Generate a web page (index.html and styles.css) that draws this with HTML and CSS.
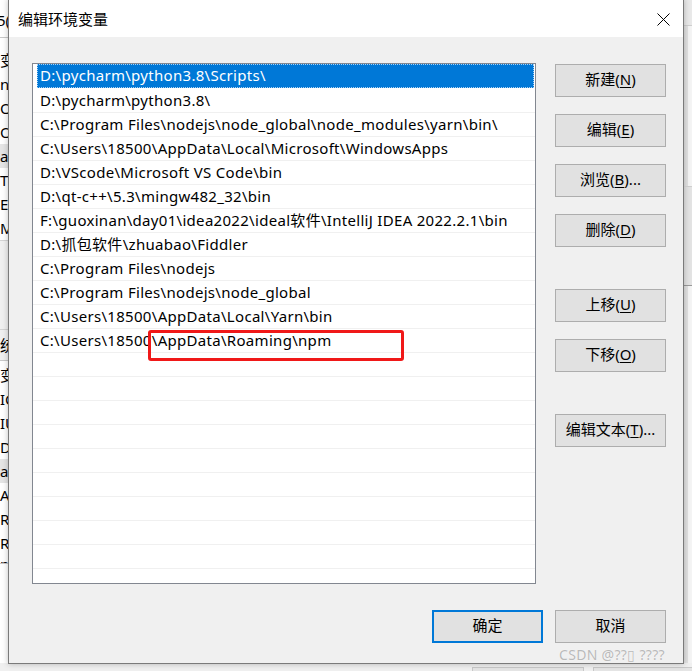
FILE: index.html
```html
<!DOCTYPE html>
<html>
<head>
<meta charset="utf-8">
<link rel="stylesheet" href="styles.css">
</head>
<body>
<div class="desktop">
  <div class="bg-left">
    <div class="bl-row bl-top">5(</div>
    <div class="bl-row">变</div>
    <div class="bl-row">nt</div>
    <div class="bl-row">Or</div>
    <div class="bl-row">Or</div>
    <div class="bl-row bl-sel">a</div>
    <div class="bl-row">T</div>
    <div class="bl-row">E</div>
    <div class="bl-row">M</div>
    <div class="bl-gap"></div>
    <div class="bl-row bl-head">统</div>
    <div class="bl-row bl-first">变</div>
    <div class="bl-row">IC</div>
    <div class="bl-row">IU</div>
    <div class="bl-row">DS</div>
    <div class="bl-row bl-sel">a</div>
    <div class="bl-row">A</div>
    <div class="bl-row">R</div>
    <div class="bl-row">R</div>
    <div class="bl-row bl-cut">n</div>
  </div>
  <div class="bg-right">
    <div class="br-a"></div>
    <div class="br-b"></div>
    <div class="br-c"></div>
    <div class="br-d"></div>
  </div>
  <div class="bg-bottom">
    <div class="bb-btn bb-1"></div>
    <div class="bb-btn bb-2"></div>
  </div>
</div>

<div class="dialog">
  <div class="titlebar">
    <span class="title">编辑环境变量</span>
    <svg class="close" width="13" height="13" viewBox="0 0 13 13"><path d="M0.5 0.5L12.5 12.5M12.5 0.5L0.5 12.5" stroke="#000" stroke-width="1" fill="none"/></svg>
  </div>
  <div class="body">
    <div class="main">
      <div class="list">
        <div class="row sel"><span class="cell">D:\pycharm\python3.8\Scripts\</span></div>
        <div class="row"><span class="cell">D:\pycharm\python3.8\</span></div>
        <div class="row"><span class="cell">C:\Program Files\nodejs\node_global\node_modules\yarn\bin\</span></div>
        <div class="row"><span class="cell">C:\Users\18500\AppData\Local\Microsoft\WindowsApps</span></div>
        <div class="row"><span class="cell">D:\VScode\Microsoft VS Code\bin</span></div>
        <div class="row"><span class="cell">D:\qt-c++\5.3\mingw482_32\bin</span></div>
        <div class="row"><span class="cell">F:\guoxinan\day01\idea2022\ideal软件\IntelliJ IDEA 2022.2.1\bin</span></div>
        <div class="row"><span class="cell">D:\抓包软件\zhuabao\Fiddler</span></div>
        <div class="row"><span class="cell">C:\Program Files\nodejs</span></div>
        <div class="row"><span class="cell">C:\Program Files\nodejs\node_global</span></div>
        <div class="row"><span class="cell">C:\Users\18500\AppData\Local\Yarn\bin</span></div>
        <div class="row"><span class="cell">C:\Users\18500\AppData\Roaming\npm</span></div>
        <div class="row"><span class="cell"></span></div>
        <div class="row"><span class="cell"></span></div>
        <div class="row"><span class="cell"></span></div>
        <div class="row"><span class="cell"></span></div>
        <div class="row"><span class="cell"></span></div>
        <div class="row"><span class="cell"></span></div>
        <div class="row"><span class="cell"></span></div>
        <div class="row"><span class="cell"></span></div>
        <div class="row"><span class="cell"></span></div>
        <div class="row"><span class="cell"></span></div>
        <div class="row"><span class="cell"></span></div>
      </div>
      <div class="side">
        <button class="btn">新建(<u>N</u>)</button>
        <button class="btn">编辑(<u>E</u>)</button>
        <button class="btn">浏览(<u>B</u>)...</button>
        <button class="btn">删除(<u>D</u>)</button>
        <button class="btn sp">上移(<u>U</u>)</button>
        <button class="btn">下移(<u>O</u>)</button>
        <button class="btn sp">编辑文本(<u>T</u>)...</button>
      </div>
    </div>
    <div class="footer">
      <button class="btn focus">确定</button>
      <button class="btn">取消</button>
    </div>
  </div>
</div>

<div class="mark"></div>
<div class="watermark">CSDN @??&#9647; ????</div>
</body>
</html>
```

FILE: styles.css
```css
html, body {
  margin: 0;
  padding: 0;
}
body {
  width: 692px;
  height: 671px;
  position: relative;
  overflow: hidden;
  background: #f0f0f0;
  font-family: "Noto Sans", "Noto Sans CJK SC", sans-serif;
  font-size: 15px;
  color: #000;
}

/* background windows */
.desktop {
  position: absolute;
  inset: 0;
}
.bg-left {
  position: absolute;
  left: 0;
  top: 0;
  width: 9px;
  height: 671px;
  background: #fff;
  display: flex;
  flex-direction: column;
  overflow: hidden;
}
.bl-row {
  height: 24px;
  line-height: 24px;
  white-space: nowrap;
  font-size: 15px;
  flex: none;
}
.bl-top {
  height: 37px;
  line-height: 40px;
  border-bottom: 1px solid #c8c8c8;
  margin-left: -3px;
  margin-bottom: 10px;
}
.bl-sel {
  background: #e5e5e5;
}
.bl-gap {
  height: 88px;
  flex: none;
  border-top: 1px solid #d4d4d4;
  border-bottom: 1px solid #d4d4d4;
  background: #f0f0f0;
}
.bl-head {
  height: 30px;
  line-height: 30px;
  background: #f0f0f0;
  border-bottom: 1px solid #c8c8c8;
}
.bl-first { margin-top: 2px; }
.bl-cut {
  height: 8px;
  line-height: 18px;
  overflow: hidden;
  border-bottom: 1px solid #c8c8c8;
}
.bg-right {
  position: absolute;
  left: 684px;
  top: 0;
  width: 8px;
  height: 671px;
  background: #f0f0f0;
  display: flex;
  flex-direction: column;
}
.br-a { height: 25px; border-bottom: 1px solid #cfcfcf; background: #e9e9e9; }
.br-b { height: 160px; border-bottom: 1px solid #cfcfcf; border-left: 4px solid #e2e2e2; background: #f4f4f4; }
.br-c { height: 98px; border-bottom: 1px solid #9a9a9a; background: #e3e3e3; }
.br-d { flex: 1; border-left: 4px solid #e2e2e2; background: #f4f4f4; }
.bg-bottom {
  position: absolute;
  left: 0;
  top: 663px;
  width: 692px;
  height: 8px;
  background: #f0f0f0;
}
.bb-btn {
  position: absolute;
  top: 4px;
  height: 10px;
  border: 1px solid #c9c9c9;
  background: #e5e5e5;
}
.bb-1 { left: 472px; width: 110px; }
.bb-2 { left: 593px; width: 110px; }

/* dialog */
.dialog {
  position: absolute;
  left: 8px;
  top: -1px;
  width: 674px;
  height: 663px;
  border: 1px solid #7a7a7a;
  background: #f0f0f0;
  box-shadow: 0 0 6px rgba(0, 0, 0, 0.25);
  display: flex;
  flex-direction: column;
}
.titlebar {
  height: 37px;
  background: #fff;
  display: flex;
  align-items: center;
  justify-content: space-between;
  padding: 0 13px 0 9px;
  flex: none;
}
.title {
  font-family: "Noto Sans CJK SC", sans-serif;
  font-size: 15px;
  margin-top: -1px;
}
.close {
  display: block;
  margin-top: 2px;
}
.body {
  flex: 1;
  display: flex;
  flex-direction: column;
  padding: 26px 17px 0 23px;
}
.main {
  display: flex;
  gap: 19px;
}
.list {
  width: 502px;
  height: 518px;
  border: 1px solid #828790;
  background: #fff;
  overflow: hidden;
  padding-top: 1px;
  box-sizing: content-box;
}
.row {
  height: 23px;
  border-bottom: 1px solid #f0f0f0;
  display: flex;
}
.cell {
  margin-left: 4px;
  padding-left: 3px;
  flex: 1;
  line-height: 23px;
  white-space: nowrap;
  font-size: 15px;
  letter-spacing: 0.3px;
}
.row.sel {
  border-bottom-color: #fff;
}
.row.sel .cell {
  background: #0078d7;
  color: #fff;
  margin-right: 1px;
  margin-top: -1px;
  padding-left: 2px;
  border: 1px dotted #a9d1f3;
  box-sizing: border-box;
  line-height: 21px;
  height: 24px;
}
.side {
  display: flex;
  flex-direction: column;
  gap: 17px;
  padding-top: 1px;
}
.btn {
  width: 111px;
  height: 33px;
  border: 1px solid #adadad;
  background: #e1e1e1;
  font-family: "Noto Sans", "Noto Sans CJK SC", sans-serif;
  font-size: 15px;
  color: #000;
  padding: 0 0 3px 0;
  line-height: 28px;
  text-align: center;
}
.btn u {
  text-underline-offset: 2px;
}
.btn.sp {
  margin-top: 25px;
}
.footer {
  display: flex;
  justify-content: flex-end;
  gap: 12px;
  margin-top: 26px;
}
.btn.focus {
  border: 2px solid #0078d7;
  line-height: 26px;
}

/* annotation overlay */
.mark {
  position: absolute;
  left: 148px;
  top: 330px;
  width: 250px;
  height: 25px;
  border: 3px solid #f01818;
  border-radius: 3px;
}
.watermark {
  position: absolute;
  left: 559px;
  top: 645px;
  font-family: "Noto Sans", sans-serif;
  font-size: 14px;
  color: #b9b9b9;
  letter-spacing: 0.3px;
  white-space: nowrap;
  text-shadow: 0 0 1px #fff;
}
```
